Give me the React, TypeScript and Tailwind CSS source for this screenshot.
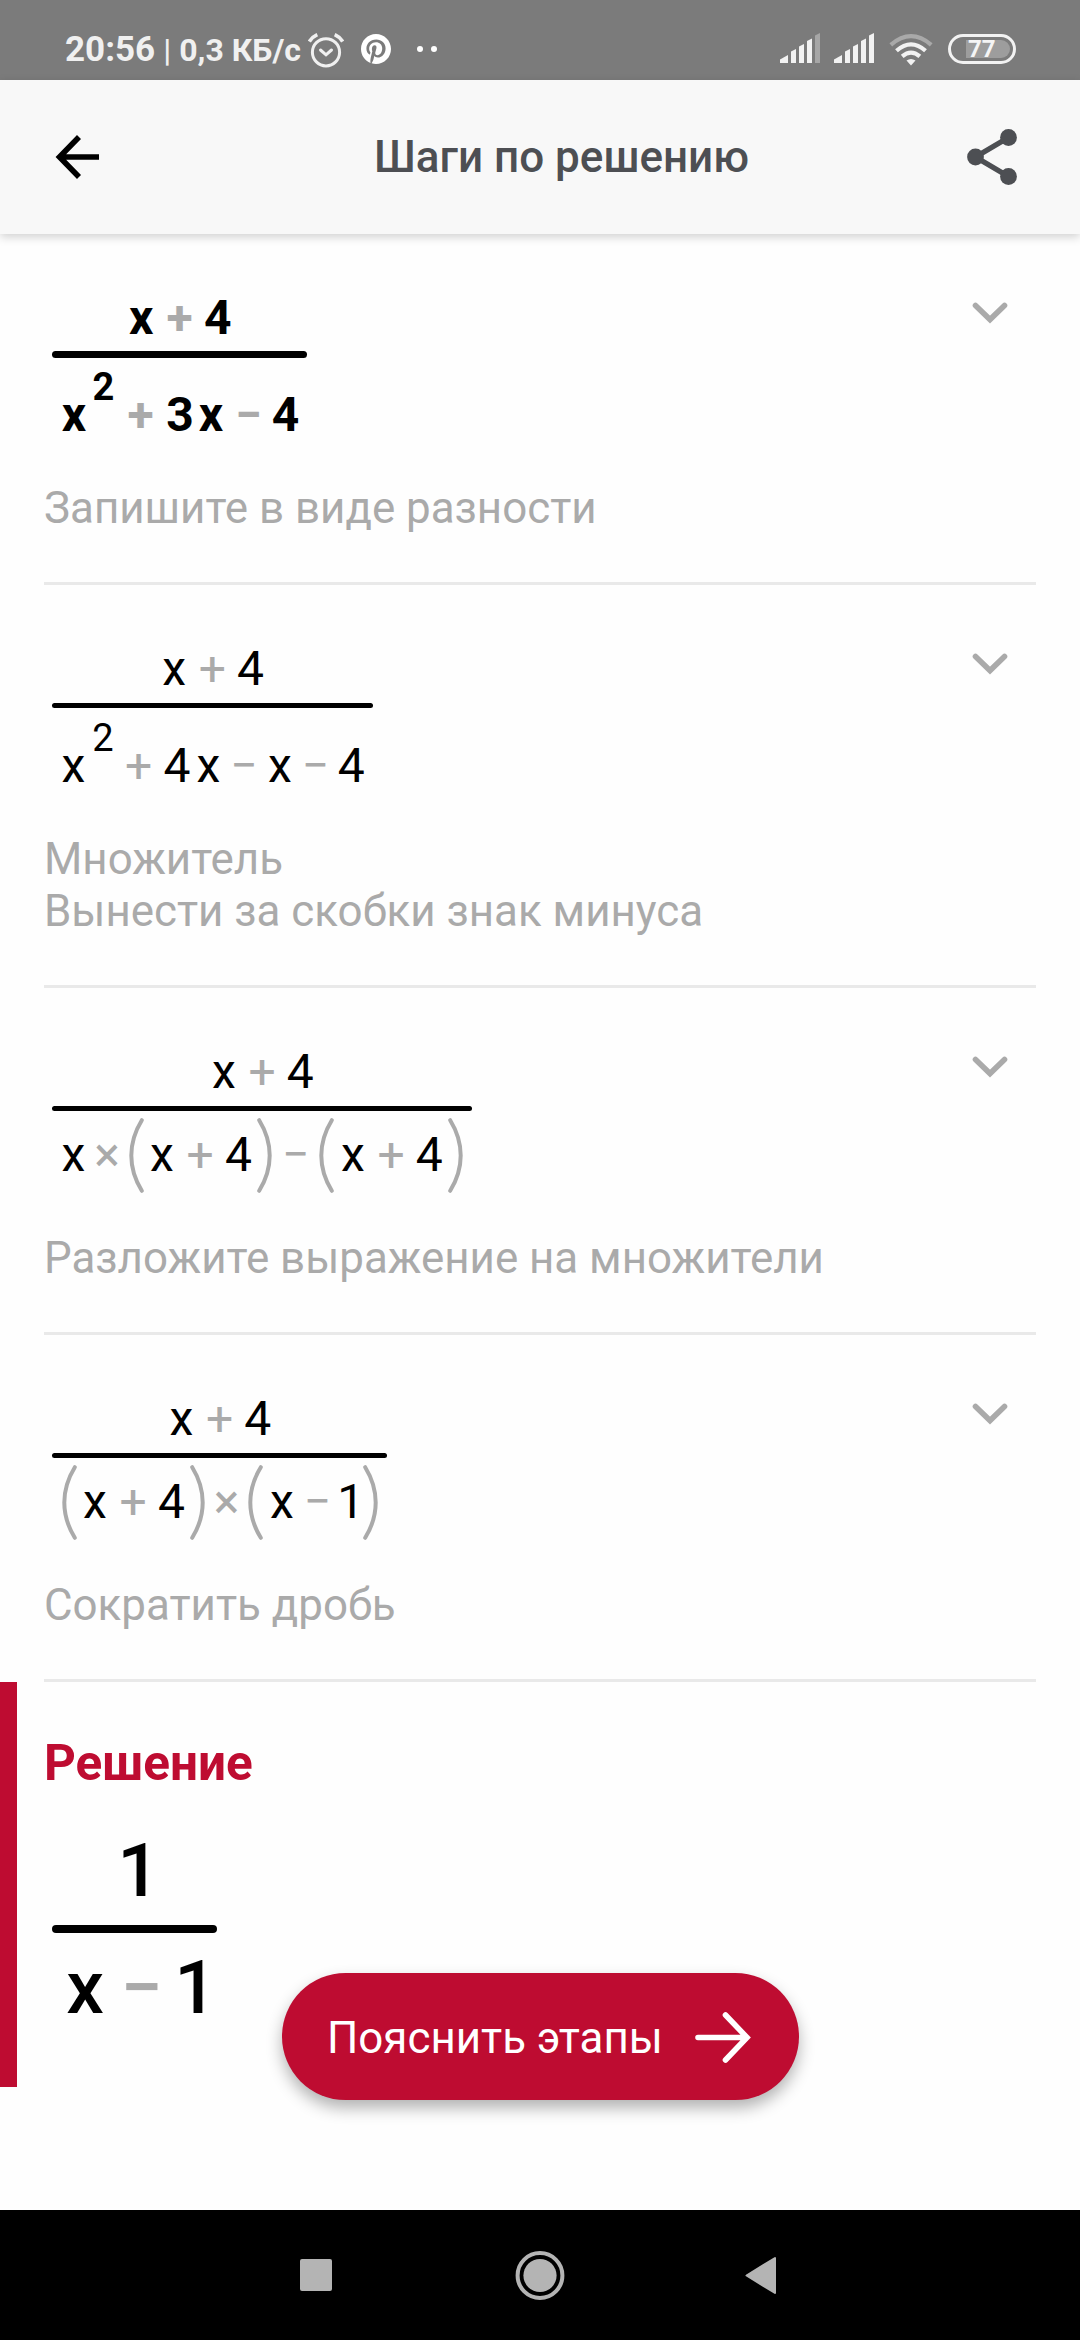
import type { ReactNode } from "react";

const Val = ({
  children,
  className = "w-[24px]",
}: {
  children: ReactNode;
  className?: string;
}) => (
  <span className={`flex shrink-0 justify-center ${className}`}>{children}</span>
);

const Op = ({
  children,
  className = "w-[52.4px]",
}: {
  children: ReactNode;
  className?: string;
}) => (
  <span className={`flex shrink-0 justify-center text-[#aaaaaa] ${className}`}>
    {children}
  </span>
);

// верхний индекс
const Sup = ({ children }: { children: ReactNode }) => (
  <span className="flex w-[27px] shrink-0 -translate-y-7 justify-center pl-2 text-[38px]">
    {children}
  </span>
);

const Paren = ({ close = false }: { close?: boolean }) => (
  <svg
    width="15"
    height="75"
    viewBox="0 0 15 75"
    fill="none"
    className={close ? "ml-[6.5px] shrink-0 -scale-x-100" : "mr-[6.5px] shrink-0"}
  >
    <path
      d="M12.8 2.2C-1.2 25 -1.2 50 12.8 72.8"
      stroke="#aaaaaa"
      strokeWidth="4"
      strokeLinecap="round"
    />
  </svg>
);

const Fraction = ({
  top,
  bottom,
  bold = false,
  tall = false,
}: {
  top: ReactNode;
  bottom: ReactNode;
  bold?: boolean;
  tall?: boolean;
}) => (
  <div
    className={`ml-[8px] flex w-fit flex-col text-[48px] leading-[60px] text-black ${
      bold ? "font-bold" : ""
    }`}
  >
    <div className="flex h-[60px] items-center justify-center">{top}</div>
    <div className="mt-[3px] flex h-[7px] items-center">
      <div
        className={`w-full rounded-full bg-black ${bold ? "h-[7px]" : "h-[5px]"}`}
      />
    </div>
    <div
      className={`flex px-[9.5px] ${
        tall ? "h-[124px] pt-[27px]" : "h-[120px] pt-[13px]"
      }`}
    >
      <div className="flex h-[60px] items-center">{bottom}</div>
    </div>
  </div>
);

const XPlus4 = () => (
  <>
    <Val>x</Val>
    <Op>+</Op>
    <Val>4</Val>
  </>
);

const Step = ({
  captions,
  children,
}: {
  captions: Array<string>;
  children: ReactNode;
}) => (
  <section className="mx-[44px] border-b-3 border-[#e9e9e9] pt-[54px] pb-[48px]">
    <div className="flex items-start justify-between">
      {children}
      <svg
        width="36"
        height="24"
        viewBox="0 0 36 24"
        fill="none"
        stroke="#aaaaaa"
        strokeWidth="5.6"
        strokeLinecap="round"
        className="mt-[13px] mr-[28px]"
      >
        <path d="M3.5 4.5L18 18.6L32.5 4.5" />
      </svg>
    </div>
    {captions.map((caption) => (
      <p key={caption} className="text-[43.9px] leading-[52px] text-[#aaaaaa]">
        {caption}
      </p>
    ))}
  </section>
);

const Signal = ({ weak = false }: { weak?: boolean }) => (
  <svg width="40" height="30" viewBox="0 0 40 30" fill="#f2f2f2">
    <path d="M0 30V26.5L8 22V30Z" />
    <path d="M11 30V18.5L16 16V30Z" />
    <path d="M19 30V13.5L24 11V30Z" />
    <path d="M27 30V8L32 5.5V30Z" />
    <path d="M35 30V2.5L40 0V30Z" fill={weak ? "#a6a6a6" : "#f2f2f2"} />
  </svg>
);

const StatusBar = () => (
  <div className="flex h-[80px] items-start bg-[#7b7b7b] text-[#f0f0f0]">
    <div className="ml-[65px] flex h-[41px] w-[236px] items-baseline pt-[29px] font-bold whitespace-nowrap">
      <span className="text-[35px] leading-[41px]">20:56</span>
      <span className="ml-[8px] text-[32px] leading-[41px] font-medium">|</span>
      <span className="ml-[8px] text-[32px] leading-[41px]">0,3 КБ/с</span>
    </div>
    <svg
      width="36"
      height="36"
      viewBox="0 0 36 36"
      fill="none"
      stroke="#f0f0f0"
      strokeWidth="3"
      className="mt-[33px] ml-[7px]"
    >
      <circle cx="18" cy="19.3" r="13.6" />
      <path d="M12.5 17L18 21.8L23.5 17" strokeLinecap="round" />
      <path d="M1.3 8.5Q4 4 9.3 1.6M26.7 1.6Q32 4 34.7 8.5" strokeWidth="3.6" />
    </svg>
    <svg
      width="30"
      height="30"
      viewBox="0 0 24 24"
      fill="#ffffff"
      className="mt-[34px] ml-[17px]"
    >
      <path d="M12 0C5.373 0 0 5.373 0 12c0 5.084 3.163 9.426 7.627 11.174-.105-.949-.2-2.405.042-3.441.218-.937 1.407-5.965 1.407-5.965s-.359-.719-.359-1.782c0-1.668.967-2.914 2.171-2.914 1.023 0 1.518.769 1.518 1.69 0 1.029-.655 2.568-.994 3.995-.283 1.194.599 2.169 1.777 2.169 2.133 0 3.772-2.249 3.772-5.495 0-2.873-2.064-4.882-5.012-4.882-3.414 0-5.418 2.561-5.418 5.207 0 1.031.397 2.138.893 2.738.098.119.112.224.083.345l-.333 1.36c-.053.22-.174.267-.402.161-1.499-.698-2.436-2.889-2.436-4.649 0-3.785 2.75-7.262 7.929-7.262 4.163 0 7.398 2.967 7.398 6.931 0 4.136-2.607 7.464-6.227 7.464-1.216 0-2.359-.631-2.75-1.378l-.748 2.853c-.271 1.043-1.002 2.35-1.492 3.146 1.124.347 2.317.535 3.554.535 6.627 0 12-5.373 12-12S18.627 0 12 0z" />
    </svg>
    <div className="mt-[46px] ml-[26px] flex gap-[8px]">
      <div className="size-[6px] rounded-full bg-white" />
      <div className="size-[6px] rounded-full bg-white" />
    </div>
    <div className="mt-[33px] mr-[64px] ml-auto flex items-start">
      <Signal weak />
      <div className="w-[14px]" />
      <Signal />
      <svg
        width="44"
        height="34"
        viewBox="0 0 44 34"
        fill="none"
        strokeWidth="4.2"
        className="ml-[15px]"
      >
        <path d="M1.8 11.8Q22 -5.5 42.2 11.8" stroke="#a9a9a9" />
        <path d="M7.5 17.8Q22 5 36.5 17.8" stroke="#f2f2f2" />
        <path d="M13.2 23.4Q22 15.8 30.8 23.4" stroke="#f2f2f2" />
        <path d="M17.5 27.6Q22 24.2 26.5 27.6L22 32.4Z" fill="#f2f2f2" />
      </svg>
      <div className="mt-[1px] ml-[15px] flex h-[30px] w-[68px] items-center rounded-full border-3 border-[#f2f2f2]">
        <div className="ml-[15px] flex h-[18px] w-[44px] items-center rounded-r-[9px] bg-[#9d9d9d] pl-[2px] text-[24px] leading-none font-bold text-[#f5f5f5]">
          77
        </div>
      </div>
    </div>
  </div>
);

const Header = () => (
  <header className="flex h-[154px] items-center bg-[#f8f8f8] pr-[63px] pl-[55px] shadow-[0_3px_9px_rgba(0,0,0,0.18)]">
    <svg width="45" height="46" viewBox="0 0 45 46" fill="none" stroke="#000" strokeWidth="5.6">
      <path d="M24 3L4.5 23L24 43M4 23H44" />
    </svg>
    <h1 className="ml-[274px] text-[44px] leading-[52px] font-medium text-[#4d4f53]">
      Шаги по решению
    </h1>
    <svg width="50" height="56" viewBox="0 0 50 56" fill="#4d4f53" className="ml-auto">
      <path d="M41.5 8.5L8.5 28L41.5 47.5" fill="none" stroke="#4d4f53" strokeWidth="5.4" />
      <circle cx="41.5" cy="8.5" r="8.4" />
      <circle cx="8.5" cy="28" r="8.4" />
      <circle cx="41.5" cy="47.5" r="8.4" />
    </svg>
  </header>
);

const Solution = () => (
  <section className="h-[405px] border-l-17 border-[#be0c31] pt-[51px] pl-[27px]">
    <h2 className="text-[49.5px] leading-[60px] font-bold text-[#be0c31]">
      Решение
    </h2>
    <div className="mt-[33px] ml-[8px] w-[165px] text-[75px] leading-[88px] font-medium text-black">
      <div className="flex justify-center pl-[8px]">1</div>
      <div className="mt-[11px] h-[8px] rounded-full bg-black" />
      <div className="mt-[10px] flex pl-[15px]">
        <Val className="w-[36px]">x</Val>
        <Op className="w-[77px]">−</Op>
        <Val className="w-[31px]">1</Val>
      </div>
    </div>
  </section>
);

const NavBar = () => (
  <nav className="flex h-[130px] items-center bg-black">
    <div className="ml-[300px] size-[32px] rounded-[2px] bg-[#b4b4b4]" />
    <svg width="50" height="50" viewBox="0 0 50 50" className="ml-[183px]">
      <circle cx="25" cy="25.5" r="22.4" fill="none" stroke="#b4b4b4" strokeWidth="4" />
      <circle cx="25" cy="25.5" r="16.6" fill="#b4b4b4" />
    </svg>
    <svg width="31" height="38" viewBox="0 0 31 38" className="ml-[180px]">
      <path
        d="M1.5 19.5L30 2V37Z"
        fill="#b4b4b4"
        stroke="#b4b4b4"
        strokeWidth="2"
        strokeLinejoin="round"
      />
    </svg>
  </nav>
);

const App = () => (
  <div className="relative flex h-[2340px] w-[1080px] flex-col overflow-hidden bg-[#fefefe] font-['Roboto',sans-serif]">
    <StatusBar />
    <Header />
    <main className="flex-1">
      <Step captions={["Запишите в виде разности"]}>
        <Fraction
          bold
          tall
          top={<XPlus4 />}
          bottom={
            <>
              <Val className="ml-[0.5px] w-[24px]">x</Val>
              <Sup>2</Sup>
              <Op className="w-[55px]">+</Op>
              <Val>3</Val>
              <Val className="ml-[7px] w-[24px]">x</Val>
              <Op className="w-[50.5px]">−</Op>
              <Val>4</Val>
            </>
          }
        />
      </Step>
      <Step captions={["Множитель", "Вынести за скобки знак минуса"]}>
        <Fraction
          tall
          top={<XPlus4 />}
          bottom={
            <>
              <Val>x</Val>
              <Sup>2</Sup>
              <Op>+</Op>
              <Val>4</Val>
              <Val className="ml-[7.5px] w-[24px]">x</Val>
              <Op className="w-[47.4px]">−</Op>
              <Val>x</Val>
              <Op className="w-[47.4px]">−</Op>
              <Val>4</Val>
            </>
          }
        />
      </Step>
      <Step captions={["Разложите выражение на множители"]}>
        <Fraction
          top={<XPlus4 />}
          bottom={
            <>
              <Val>x</Val>
              <Op className="w-[43px]">×</Op>
              <Paren />
              <XPlus4 />
              <Paren close />
              <Op className="w-[47.5px]">−</Op>
              <Paren />
              <XPlus4 />
              <Paren close />
            </>
          }
        />
      </Step>
      <Step captions={["Сократить дробь"]}>
        <Fraction
          top={<XPlus4 />}
          bottom={
            <>
              <Paren />
              <XPlus4 />
              <Paren close />
              <Op className="w-[43.5px]">×</Op>
              <Paren />
              <Val>x</Val>
              <Op className="w-[47.4px]">−</Op>
              <Val className="w-[15px] pl-1">1</Val>
              <Paren close />
            </>
          }
        />
      </Step>
      <Solution />
    </main>
    <NavBar />
    <button className="absolute top-[1973px] left-[282px] flex h-[127px] w-[517px] items-center rounded-full bg-[#be0c31] pl-[45px] text-[43.9px] leading-[52px] text-white shadow-[0_8px_16px_rgba(0,0,0,0.3)]">
      <span className="w-[368px] pt-[2px] text-left whitespace-nowrap">
        Пояснить этапы
      </span>
      <svg
        width="56"
        height="52"
        viewBox="0 0 56 52"
        fill="none"
        stroke="#fff"
        strokeWidth="5.6"
        strokeLinecap="round"
      >
        <path d="M3 26.5H52M30.5 4L52 26.5L30.5 49" />
      </svg>
    </button>
  </div>
);

export default App;
